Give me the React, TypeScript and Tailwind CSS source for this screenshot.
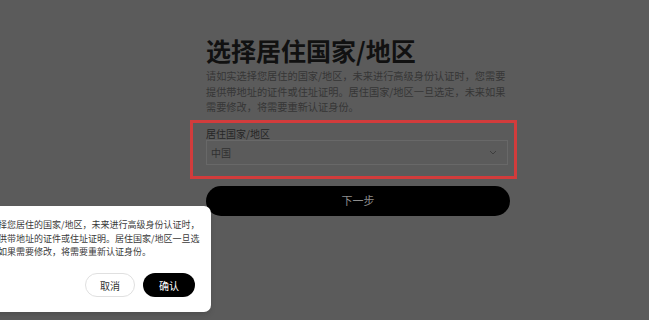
import React from "react";

export default function App() {
  const font = { fontFamily: '"Noto Sans CJK SC", "Noto Sans", sans-serif' };
  return (
    <div
      className="relative w-[649px] h-[320px] overflow-hidden bg-[#5b5b5b]"
      style={font}
    >
      <div className="ml-[206px] w-[304px] pt-[35px]">
        <h1 className="text-[25px] leading-[30px] font-bold text-[#111111] whitespace-nowrap">
          选择居住国家/地区
        </h1>
        <p className="mt-[3px] text-[10.2px] leading-[15.5px] text-[#363636] whitespace-nowrap">
          请如实选择您居住的国家/地区，未来进行高级身份认证时，您需要
          <br />
          提供带地址的证件或住址证明。居住国家/地区一旦选定，未来如果
          <br />
          需要修改，将需要重新认证身份。
        </p>
        <div className="mt-[5px] -ml-[16px] w-[327px] border-[3px] border-[#d23c3c] pl-[13px] pr-[6px] pt-[4px] pb-[11px]">
          <div className="text-[10px] leading-[13px] text-[#262626] whitespace-nowrap">
            居住国家/地区
          </div>
          <div className="flex h-[25px] items-center justify-between border border-[#686868] pl-[4px] pr-[10px]">
            <span className="text-[10px] text-[#303030]">中国</span>
            <svg width="8" height="5" viewBox="0 0 8 5" fill="none">
              <path d="M1 1l3 3 3-3" stroke="#3e3e3e" strokeWidth="1" />
            </svg>
          </div>
        </div>
        <button className="mt-[7px] flex h-[30px] w-[304px] items-center justify-center rounded-full bg-black text-[11px] text-[#8e8e8e]">
          下一步
        </button>
      </div>

      <div className="absolute left-[-60px] top-[206px] flex h-[106px] w-[271px] flex-col rounded-[7px] bg-white pl-[22px] pr-[16px] pt-[12px] pb-[15px] shadow-md">
        <p className="text-[9px] leading-[13.5px] text-[#3a3a3a] whitespace-nowrap">
          请如实选择您居住的国家/地区，未来进行高级身份认证时，
          <br />
          您需要提供带地址的证件或住址证明。居住国家/地区一旦选
          <br />
          定，未来如果需要修改，将需要重新认证身份。
        </p>
        <div className="mt-auto flex justify-end gap-[8px]">
          <button className="flex h-[24px] w-[50px] items-center justify-center rounded-full border border-[#e0e0e0] bg-white text-[10px] text-[#333333]">
            取消
          </button>
          <button className="flex h-[24px] w-[52px] items-center justify-center rounded-full bg-black text-[10px] text-white">
            确认
          </button>
        </div>
      </div>
    </div>
  );
}
